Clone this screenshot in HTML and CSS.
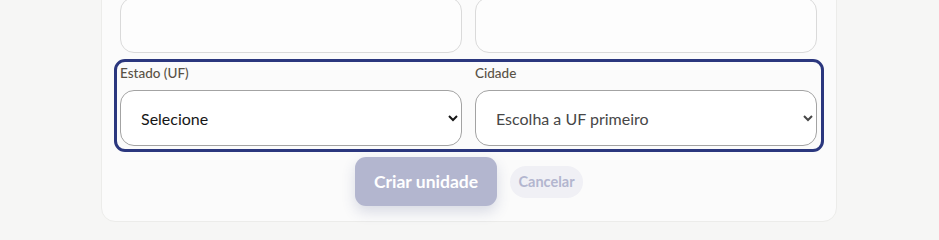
FILE: index.html
```html
<!DOCTYPE html>
<html lang="pt-BR">
<head>
<meta charset="utf-8">
<title>Nova unidade</title>
<link rel="stylesheet" href="styles.css">
</head>
<body>
<div class="page">
  <form class="card">
    <div class="row">
      <input class="field" type="text">
      <input class="field" type="text">
    </div>
    <div class="row focus-row">
      <label class="group">
        <span class="label">Estado (UF)</span>
        <select class="select dark">
          <option>Selecione</option>
        </select>
      </label>
      <label class="group">
        <span class="label">Cidade</span>
        <select class="select muted">
          <option>Escolha a UF primeiro</option>
        </select>
      </label>
    </div>
    <div class="actions">
      <button type="button" class="btn-primary">Criar unidade</button>
      <button type="button" class="btn-cancel">Cancelar</button>
    </div>
  </form>
</div>
</body>
</html>
```
FILE: styles.css
```css
html, body {
  margin: 0;
  padding: 0;
  background: #f6f6f5;
  font-family: Lato, "Noto Sans", sans-serif;
  overflow: hidden;
}
.page {
  width: 939px;
  height: 240px;
  display: flex;
  justify-content: center;
}
.card {
  box-sizing: border-box;
  width: 736px;
  margin-top: -60px;
  margin-left: -1px;
  align-self: flex-start;
  background: #fbfbfb;
  border: 1px solid #ececea;
  border-radius: 14px;
  padding: 0 18px 15px 18px;
  display: flex;
  flex-direction: column;
}
.row {
  display: grid;
  grid-template-columns: 342px 342px;
  column-gap: 13px;
}
.field {
  box-sizing: border-box;
  height: 56px;
  margin-top: 56px;
  border: 1px solid #dadada;
  border-radius: 14px;
  background: #fdfdfd;
}
.focus-row {
  margin-top: 12px;
  outline: 3px solid #2b377e;
  outline-offset: 3px;
  border-radius: 5px;
}
.group {
  display: flex;
  flex-direction: column;
}
.label {
  font-size: 13.5px;
  line-height: 16px;
  font-weight: 500;
  color: #5a5246;
  margin-bottom: 9px;
}
.select {
  box-sizing: border-box;
  height: 56px;
  border: 1px solid #a3a3a3;
  border-radius: 14px;
  background-color: #ffffff;
  font-family: Lato, "Noto Sans", sans-serif;
  font-size: 16px;
  padding: 0 10px 0 16px;
}
.dark { color: #161616; }
.muted { color: #474747; }
.actions {
  margin-top: 11px;
  display: flex;
  justify-content: center;
  align-items: center;
  gap: 13px;
}
.btn-primary {
  width: 142px;
  height: 49px;
  border: none;
  border-radius: 11px;
  background: #b3b6cf;
  color: #ffffff;
  font-family: Lato, "Noto Sans", sans-serif;
  font-weight: 700;
  font-size: 17.5px;
  box-shadow: 0 6px 14px rgba(60, 70, 130, 0.18);
}
.btn-cancel {
  width: 73px;
  height: 32px;
  border: none;
  border-radius: 16px;
  background: #f0f0f5;
  color: #b3b6cf;
  font-family: Lato, "Noto Sans", sans-serif;
  font-weight: 700;
  font-size: 14.5px;
}
```
